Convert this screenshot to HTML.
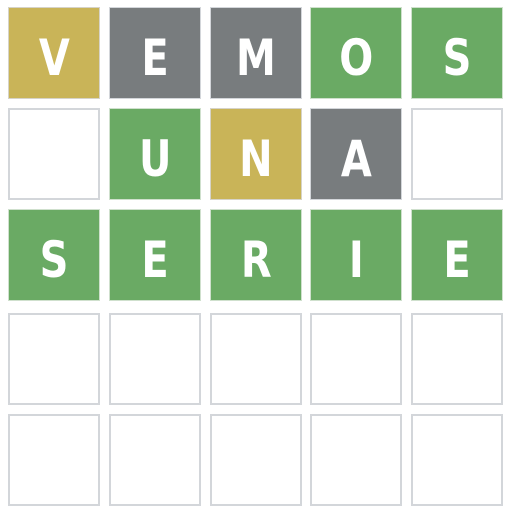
<!DOCTYPE html><html><head><style>
body{margin:0;width:512px;height:512px;background:#fff;position:relative;overflow:hidden}
.t{position:absolute;width:92px;height:92px;box-sizing:border-box;display:flex;align-items:center;justify-content:center;color:#fff;font:bold 50px "DejaVu Sans",sans-serif}
.t span{display:inline-block;transform:scaleX(0.8);position:relative;top:5px}
.e{border:2px solid #d3d6da}
.y{background:#c9b458;border:1px solid #d6d3c8}.g{background:#6aaa64;border:1px solid #cfe0cd}.x{background:#787c7e;border:1px solid #d3d6da}
</style></head><body>
<div class="t y" style="left:8px;top:7px"><span>V</span></div>
<div class="t x" style="left:109px;top:7px"><span>E</span></div>
<div class="t x" style="left:210px;top:7px"><span>M</span></div>
<div class="t g" style="left:310px;top:7px"><span>O</span></div>
<div class="t g" style="left:411px;top:7px"><span>S</span></div>
<div class="t e" style="left:8px;top:108px"></div>
<div class="t g" style="left:109px;top:108px"><span>U</span></div>
<div class="t y" style="left:210px;top:108px"><span>N</span></div>
<div class="t x" style="left:310px;top:108px"><span>A</span></div>
<div class="t e" style="left:411px;top:108px"></div>
<div class="t g" style="left:8px;top:209px"><span>S</span></div>
<div class="t g" style="left:109px;top:209px"><span>E</span></div>
<div class="t g" style="left:210px;top:209px"><span>R</span></div>
<div class="t g" style="left:310px;top:209px"><span>I</span></div>
<div class="t g" style="left:411px;top:209px"><span>E</span></div>
<div class="t e" style="left:8px;top:313px"></div>
<div class="t e" style="left:109px;top:313px"></div>
<div class="t e" style="left:210px;top:313px"></div>
<div class="t e" style="left:310px;top:313px"></div>
<div class="t e" style="left:411px;top:313px"></div>
<div class="t e" style="left:8px;top:414px"></div>
<div class="t e" style="left:109px;top:414px"></div>
<div class="t e" style="left:210px;top:414px"></div>
<div class="t e" style="left:310px;top:414px"></div>
<div class="t e" style="left:411px;top:414px"></div>
</body></html>
